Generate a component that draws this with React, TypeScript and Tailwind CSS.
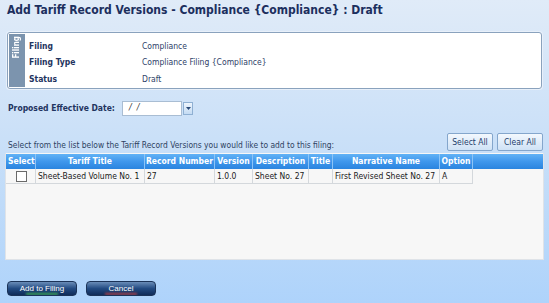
import React from "react";

const F = { fontFamily: "'DejaVu Sans Condensed', 'DejaVu Sans', 'Liberation Sans', sans-serif" };

const cols = [
  { name: "Select", w: 30, align: "text-left pl-[2px]" },
  { name: "Tariff Title", w: 109, align: "text-center" },
  { name: "Record Number", w: 70, align: "text-center" },
  { name: "Version", w: 38, align: "text-center" },
  { name: "Description", w: 56, align: "text-center" },
  { name: "Title", w: 24, align: "text-center" },
  { name: "Narrative Name", w: 107, align: "text-center" },
  { name: "Option", w: 33, align: "text-center" },
];

const row = ["", "Sheet-Based Volume No. 1", "27", "1.0.0", "Sheet No. 27", "", "First Revised Sheet No. 27", "A"];

export default function App() {
  return (
    <div
      style={F}
      className="w-[549px] h-[303px] overflow-hidden flex flex-col bg-gradient-to-b from-[#e0ebf8] via-[#c8dff8] to-[#aed3fb] text-[#1f3460]"
    >
      <div className="pl-[7px] pt-[3px] h-[18px] text-[12px] leading-[15px] font-bold text-[#1c2f5e]">
        Add Tariff Record Versions - Compliance {"{Compliance}"} : Draft
      </div>

      <div className="mt-[14px] mx-[7px] h-[57px] border border-[#8aa2bd] rounded-[3px] bg-white flex shadow-[0_0_0_1px_#e8f0fa] p-[1px]">
        <div className="w-[16px] bg-[#7c94ae] flex items-start justify-center">
          <span className="mt-[2px] text-white text-[8px] font-bold [writing-mode:vertical-rl] rotate-180 leading-[10px]">
            Filing
          </span>
        </div>
        <div className="flex-1 pl-[4px] pt-[4px] text-[8.5px]">
          <div className="h-[16px] flex items-center">
            <span className="w-[113px] font-bold text-[#1f3460]">Filing</span>
            <span className="text-[#2e4168]">Compliance</span>
          </div>
          <div className="h-[17px] flex items-center">
            <span className="w-[113px] font-bold text-[#1f3460]">Filing Type</span>
            <span className="text-[#2e4168]">Compliance Filing {"{Compliance}"}</span>
          </div>
          <div className="h-[16px] flex items-center">
            <span className="w-[113px] font-bold text-[#1f3460]">Status</span>
            <span className="text-[#2e4168]">Draft</span>
          </div>
        </div>
      </div>

      <div className="mt-[11px] h-[16px] flex items-center pl-[8px]">
        <span className="w-[114px] text-[8.5px] font-bold text-[#1f3460]">Proposed Effective Date:</span>
        <div className="h-[15px] w-[60px] bg-white border border-[#a9bdd3] text-[9px] flex items-center pl-[6px] text-[#333]">
          <span className="italic">/&nbsp;&nbsp;/</span>
        </div>
        <div className="h-[13px] w-[10px] ml-[1px] border border-[#8fb0d3] bg-gradient-to-b from-[#eef5fd] to-[#c4dbf3] flex items-center justify-center">
          <svg width="5" height="3" viewBox="0 0 5 3">
            <path d="M0 0 L5 0 L2.5 3 Z" fill="#2a4a78" />
          </svg>
        </div>
      </div>

      <div className="mt-[17px] h-[18px] flex items-center pl-[8px] pr-[6px]">
        <span className="flex-1 text-[8.4px] text-[#2d3f5f] pt-[6px]">
          Select from the list below the Tariff Record Versions you would like to add to this filing:
        </span>
        <button className="h-[18px] w-[46px] border border-[#84a6cc] rounded-[2px] bg-gradient-to-b from-[#f3f8fe] to-[#cfe2f6] text-[8.5px] text-[#1d3c6c]">
          Select All
        </button>
        <button className="ml-[4px] h-[18px] w-[46px] border border-[#84a6cc] rounded-[2px] bg-gradient-to-b from-[#f3f8fe] to-[#cfe2f6] text-[8.5px] text-[#1d3c6c]">
          Clear All
        </button>
      </div>

      <div className="mt-[2px] mx-[5px] h-[107px] bg-[#f7f7f7] border border-[#dfe3e8] border-t-0 pt-[1px]">
        <div className="flex h-[15px] bg-gradient-to-b from-[#62b2f6] via-[#3f97ec] to-[#2a84df]">
          {cols.map((c, i) => (
            <div
              key={i}
              style={{ width: c.w }}
              className={`shrink-0 ${c.align} text-white font-bold text-[8.5px] leading-[15px] border-r border-[#8cc4f7] whitespace-nowrap overflow-hidden`}
            >
              {c.name}
            </div>
          ))}
        </div>
        <div className="flex h-[15px] bg-[#f7f7f7]">
          {cols.map((c, i) => (
            <div
              key={i}
              style={{ width: c.w }}
              className="shrink-0 border-r border-b border-[#d4d8dc] text-[8.5px] leading-[14px] pl-[2px] text-[#1a1a1a] whitespace-nowrap overflow-hidden flex items-center"
            >
              {i === 0 ? (
                <div className="ml-[8px] w-[11px] h-[11px] border border-[#6a6a6a] bg-white" />
              ) : (
                row[i]
              )}
            </div>
          ))}
        </div>
      </div>

      <div className="mt-[21px] flex pl-[7px] gap-[9px]">
        <button className="relative h-[15px] w-[70px] rounded-[4px] border border-[#1b3358] bg-gradient-to-b from-[#6a8db8] via-[#234b82] to-[#102c59] text-white text-[8px] overflow-hidden" style={{ fontFamily: "'Liberation Sans', sans-serif" }}>
          <span className="relative z-10">Add to Filing</span>
          <span className="absolute left-[18px] right-[18px] bottom-0 h-[2px] bg-[#3fae5a] blur-[1px]" />
        </button>
        <button className="relative h-[15px] w-[70px] rounded-[4px] border border-[#1b3358] bg-gradient-to-b from-[#6a8db8] via-[#234b82] to-[#102c59] text-white text-[8px] overflow-hidden" style={{ fontFamily: "'Liberation Sans', sans-serif" }}>
          <span className="relative z-10">Cancel</span>
          <span className="absolute left-[18px] right-[18px] bottom-0 h-[2px] bg-[#b0424a] blur-[1px]" />
        </button>
      </div>
    </div>
  );
}
